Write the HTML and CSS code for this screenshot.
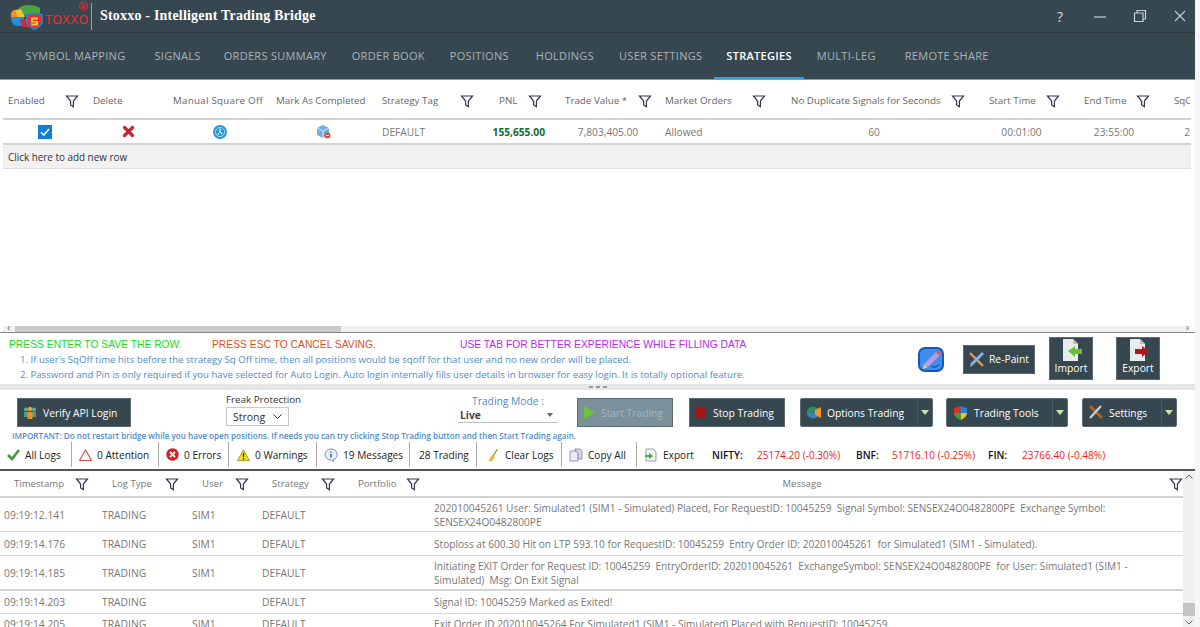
FILE: index.html
```html
<!DOCTYPE html>
<html lang="en">
<head>
    <meta charset="utf-8">
    <title>Stoxxo - Intelligent Trading Bridge</title>
    <link rel="stylesheet" href="styles.css">
</head>
<body>
<svg class="defs" width="0" height="0">
    <symbol id="funnel" viewBox="0 0 14 14">
        <path d="M1.5 2h11L8.4 7v5.6L5.6 11V7z" fill="none" stroke="#3d3450" stroke-width="1.2"/>
    </symbol>
    <symbol id="caret" viewBox="0 0 8 5">
        <path d="M0 0h8L4 5z" fill="#c9e6a8"/>
    </symbol>
</svg>

<div class="app">
    <!-- Title bar -->
    <header class="titlebar">
        <svg class="logo" width="35" height="30" viewBox="10 0 35 30">
            <path d="M19 7c4-4 15-4 21 0v7l-11 3-10-6z" fill="#46a83c"/>
            <path d="M15 9l6-1 4 8-9 1z" fill="#e8c23a"/>
            <path d="M11 13c0-2 2-4 4-4l3 8-7 0z" fill="#f2911f"/>
            <path d="M11 16h13v9h-7c-4 0-6-5-6-9z" fill="#1f8fe0"/>
            <path d="M20 18h10v8h-8z" fill="#d42a2a"/>
            <path d="M26 13c3-1.500 14-1.500 17 0v7c0 4-4 7-8.500 9.500C30 27 26 24 26 20z" fill="#2a7fd0"/>
            <path d="M28 14.500c3-1 10-1 13 0v5.500c0 3-3 5.500-6.500 7.500C31 25.500 28 23 28 20z" fill="#e63028"/>
            <path d="M31 16.500h7v2h-5v1.500h5v4.500h-7v-2h5v-1h-5z" fill="#f6c93a"/>
        </svg>
        <span class="brand">TOXXO<sup>®</sup></span>
        <h1 class="app-title">Stoxxo - Intelligent Trading Bridge</h1>
        <div class="win-controls">
            <span class="win-help">?</span>
            <svg width="14" height="14" viewBox="0 0 14 14"><path d="M1 8h12" stroke="#c9d0d4" stroke-width="1.2"/></svg>
            <svg width="14" height="14" viewBox="0 0 14 14"><path d="M1.5 4h8.500v8.500H1.500zM4 4V1.500h8.500V10H10" fill="none" stroke="#c9d0d4" stroke-width="1.2"/></svg>
            <svg width="14" height="14" viewBox="0 0 14 14"><path d="M2 2l10 10M12 2L2 12" stroke="#c9d0d4" stroke-width="1.1"/></svg>
        </div>
    </header>

    <!-- Main tabs -->
    <nav class="tabs">
        <a class="tab">Symbol Mapping</a>
        <a class="tab">Signals</a>
        <a class="tab">Orders Summary</a>
        <a class="tab">Order Book</a>
        <a class="tab">Positions</a>
        <a class="tab">Holdings</a>
        <a class="tab">User Settings</a>
        <a class="tab active">Strategies</a>
        <a class="tab">Multi-Leg</a>
        <a class="tab">Remote Share</a>
    </nav>

    <!-- Strategies grid -->
    <section class="strategies">
        <div class="grid-head strat-cols">
            <div class="hc hc-enabled">Enabled<svg class="funnel"><use href="#funnel"/></svg></div>
            <div class="hc hc-delete">Delete</div>
            <div class="hc hc-manual">Manual Square Off</div>
            <div class="hc hc-mark">Mark As Completed</div>
            <div class="hc hc-tag">Strategy Tag<svg class="funnel"><use href="#funnel"/></svg></div>
            <div class="hc hc-pnl">PNL<svg class="funnel"><use href="#funnel"/></svg></div>
            <div class="hc hc-value">Trade Value *<svg class="funnel"><use href="#funnel"/></svg></div>
            <div class="hc hc-market">Market Orders<svg class="funnel"><use href="#funnel"/></svg></div>
            <div class="hc hc-dup">No Duplicate Signals for Seconds<svg class="funnel"><use href="#funnel"/></svg></div>
            <div class="hc hc-start">Start Time<svg class="funnel"><use href="#funnel"/></svg></div>
            <div class="hc hc-end">End Time<svg class="funnel"><use href="#funnel"/></svg></div>
            <div class="hc hc-sq">SqO</div>
        </div>
        <div class="grid-row strat-cols">
            <div class="cell center">
                <svg width="14" height="14" viewBox="0 0 14 14"><rect width="14" height="14" fill="#0f7fd8"/><path d="M3 7.200l2.800 2.800L11 4" fill="none" stroke="#fff" stroke-width="1.6"/></svg>
            </div>
            <div class="cell center">
                <svg width="13" height="13" viewBox="0 0 13 13"><path d="M2.500 2.500l8 8M10.500 2.500l-8 8" stroke="#c8262a" stroke-width="3.2" stroke-linecap="round"/></svg>
            </div>
            <div class="cell center">
                <svg width="14" height="14" viewBox="0 0 14 14"><circle cx="7" cy="7" r="7" fill="#2b95d6"/><circle cx="7" cy="7" r="4.600" fill="none" stroke="#a6d8f2" stroke-width="1"/><path d="M7 3.600V7l2.400 2M4.600 9.500l1.500-1.300" stroke="#fff" stroke-width="1.1" fill="none"/></svg>
            </div>
            <div class="cell center">
                <svg width="15" height="15" viewBox="0 0 15 15"><path d="M1 4l6-3 6 3v7l-6 3-6-3z" fill="#6fb0e0"/><path d="M1 4l6 3 6-3M7 7v7" fill="none" stroke="#dcecf8" stroke-width=".9"/><circle cx="11.500" cy="11.500" r="3" fill="#e5473a"/><path d="M10 11.500h3" stroke="#fff" stroke-width="1"/></svg>
            </div>
            <div class="cell tag">DEFAULT</div>
            <div class="cell pnl">155,655.00</div>
            <div class="cell center">7,803,405.00</div>
            <div class="cell tag">Allowed</div>
            <div class="cell center dup">60</div>
            <div class="cell center">00:01:00</div>
            <div class="cell center">23:55:00</div>
            <div class="cell sq">2</div>
        </div>
        <div class="add-row">Click here to add new row</div>
        <div class="grid-empty"></div>
        <div class="h-scroll">
            <span class="arrow">&lsaquo;</span>
            <div class="h-thumb"></div>
            <span class="arrow arrow-right">&rsaquo;</span>
        </div>
    </section>

    <!-- Hints under the grid -->
    <section class="hints">
        <div class="hint-text">
            <div class="hint-keys">
                <span class="key-enter">PRESS ENTER TO SAVE THE ROW.</span>
                <span class="key-esc">PRESS ESC TO CANCEL SAVING.</span>
                <span class="key-tab">USE TAB FOR BETTER EXPERIENCE WHILE FILLING DATA</span>
            </div>
            <p class="hint-line">1. If user's SqOff time hits before the strategy Sq Off time, then all positions would be sqoff for that user and no new order will be placed.</p>
            <p class="hint-line">2. Password and Pin is only required if you have selected for Auto Login. Auto login internally fills user details in browser for easy login. It is totally optional feature.</p>
        </div>
        <div class="hint-actions">
            <svg class="paint-badge" width="28" height="27" viewBox="0 0 28 27">
                <rect x="1" y="1" width="26" height="25" rx="7" fill="#1457c4"/>
                <rect x="3" y="3" width="22" height="21" rx="5" fill="#3f8ee8"/>
                <path d="M14 20c3 2 7 1 8-2" fill="none" stroke="#1457c4" stroke-width="1.5"/>
                <path d="M7 18L19 6l3.500 3.500-12 12z" fill="#b49ae8"/>
                <path d="M7 18l3.500 3.500-5 1.500z" fill="#f4c36a"/>
                <path d="M19 6l3.500 3.500 2-3-2.500-2z" fill="#e8506a"/>
            </svg>
            <button class="btn btn-repaint">
                <svg width="17" height="17" viewBox="0 0 17 17"><path d="M2 2l13 13" stroke="#d9a05a" stroke-width="2.4"/><path d="M15 2L3 14" stroke="#7cb6e8" stroke-width="3"/><path d="M3 14l-1.500 2 2.500-1z" fill="#f2d08a"/></svg>
                Re-Paint
            </button>
            <button class="btn btn-tall">
                <svg width="26" height="24" viewBox="0 0 26 24"><path d="M5 1h10l5 5v17H5z" fill="#e8ebec"/><path d="M15 1v5h5z" fill="#b6bdc0"/><path d="M10 13l7-5v3h7v5h-7v3z" fill="#6cbf3a"/></svg>
                Import
            </button>
            <button class="btn btn-tall btn-export">
                <svg width="26" height="24" viewBox="0 0 26 24"><path d="M5 1h10l5 5v17H5z" fill="#e8ebec"/><path d="M15 1v5h5z" fill="#b6bdc0"/><path d="M24 13l-7-5v3h-7v5h7v3z" fill="#b8141c"/></svg>
                Export
            </button>
        </div>
    </section>

    <div class="splitter"><span></span><span></span><span></span></div>

    <!-- Trading controls -->
    <section class="controls">
        <button class="btn btn-verify">
            <svg width="14" height="14" viewBox="0 0 14 14"><circle cx="3" cy="3.500" r="2" fill="#5fb0a0"/><circle cx="11" cy="3.500" r="2" fill="#5fb0a0"/><circle cx="7" cy="3" r="2.200" fill="#e8a43a"/><path d="M1 6h4v5H1zM9 6h4v5H9z" fill="#4f9c8a"/><path d="M4.500 6h5v7h-5z" fill="#e8952a"/></svg>
            Verify API Login
        </button>
        <div class="freak">
            <label>Freak Protection</label>
            <div class="select-box">Strong
                <svg width="9" height="5" viewBox="0 0 9 5"><path d="M.5.500l4 4 4-4" fill="none" stroke="#333" stroke-width="1"/></svg>
            </div>
        </div>
        <div class="mode">
            <label>Trading Mode :</label>
            <div class="mode-select"><b>Live</b><i></i></div>
        </div>
        <button class="btn btn-start" disabled>
            <svg width="11" height="13" viewBox="0 0 11 13"><path d="M0 0l11 6.500L0 13z" fill="#6fc23a"/></svg>
            Start Trading
        </button>
        <button class="btn btn-stop">
            <svg width="11" height="11" viewBox="0 0 11 11"><rect width="11" height="11" fill="#a81414"/></svg>
            Stop Trading
        </button>
        <div class="split btn-options">
            <button class="btn split-main">
                <svg width="15" height="13" viewBox="0 0 15 13"><circle cx="6" cy="6.500" r="6" fill="#2f8f5a"/><path d="M0 6.500h12a6 6 0 0 1-12 0z" fill="#3f7fb8"/><path d="M8 4l6-3v11L8 9z" fill="#e89a2a"/></svg>
                Options Trading
            </button>
            <span class="split-arrow"><svg width="8" height="5"><use href="#caret"/></svg></span>
        </div>
        <div class="split btn-tools">
            <button class="btn split-main">
                <svg width="13" height="14" viewBox="0 0 13 14"><path d="M6.500 7H13c0 3-3 5.500-6.500 7z" fill="#e8c21e"/><path d="M6.500 0L0 2v5h6.500z" fill="#d8322a"/><path d="M0 7c0 3 3 5.500 6.500 7V7z" fill="#3f9a3a"/><path d="M6.500 0L13 2v5H6.500z" fill="#2f7fd0"/></svg>
                Trading Tools
            </button>
            <span class="split-arrow"><svg width="8" height="5"><use href="#caret"/></svg></span>
        </div>
        <div class="split btn-settings">
            <button class="btn split-main">
                <svg width="15" height="15" viewBox="0 0 15 15"><path d="M2 1l12 12" stroke="#b5641e" stroke-width="2.600"/><path d="M13 1L2 13" stroke="#c8ccce" stroke-width="2.400"/></svg>
                Settings
            </button>
            <span class="split-arrow"><svg width="8" height="5"><use href="#caret"/></svg></span>
        </div>
    </section>
    <p class="important">IMPORTANT: Do not restart bridge while you have open positions. If needs you can try clicking Stop Trading button and then Start Trading again.</p>

    <!-- Log toolbar -->
    <section class="log-bar">
        <div class="log-item li-all">
            <svg width="13" height="13" viewBox="0 0 13 13"><path d="M1 7l4 4 7-9" fill="none" stroke="#3f9a3a" stroke-width="2.600"/></svg>All Logs
        </div>
        <div class="log-item li-att">
            <svg width="13" height="12" viewBox="0 0 13 12"><path d="M6.500 1L12.500 11.500H.5z" fill="#fff" stroke="#d9574a" stroke-width="1.2"/></svg>0 Attention
        </div>
        <div class="log-item li-err">
            <svg width="13" height="13" viewBox="0 0 13 13"><circle cx="6.500" cy="6.500" r="6.200" fill="#d61f26"/><path d="M4 4l5 5M9 4l-5 5" stroke="#fff" stroke-width="1.8"/></svg>0 Errors
        </div>
        <div class="log-item li-warn">
            <svg width="13" height="12" viewBox="0 0 13 12"><path d="M6.500 .8L12.600 11.500H.4z" fill="#f3d91e" stroke="#8a8420" stroke-width=".7"/><path d="M6.500 4v4M6.500 9v1.400" stroke="#222" stroke-width="1.2"/></svg>0 Warnings
        </div>
        <div class="log-item li-msg">
            <svg width="14" height="14" viewBox="0 0 14 14"><path d="M7 1a6 5.500 0 0 1 2 10.700L9.500 13.500 7 12A6 5.500 0 0 1 7 1z" fill="#e8eef8" stroke="#7c8fc0"/><path d="M7 3.500v1M7 6v3.500" stroke="#2f5fb0" stroke-width="1.500"/></svg>19 Messages
        </div>
        <div class="log-item li-trd">28 Trading</div>
        <div class="log-item li-clear">
            <svg width="12" height="14" viewBox="0 0 12 14"><path d="M10.500 1L6 8" stroke="#a8862a" stroke-width="1.3"/><path d="M5 7l3 2-3 4H1.500z" fill="#e8b82a"/></svg>Clear Logs
        </div>
        <div class="log-item li-copy">
            <svg width="14" height="14" viewBox="0 0 14 14"><path d="M1 3h6l2 2v8H1z" fill="#eaeaf6" stroke="#7f7fa8" stroke-width=".8"/><path d="M6 1h5l2 2v8H9V5L7 3H6z" fill="#d4d4ec" stroke="#7f7fa8" stroke-width=".8"/></svg>Copy All
        </div>
        <div class="log-item li-export">
            <svg width="13" height="14" viewBox="0 0 13 14"><path d="M2 1h7l3 3v9H2z" fill="#f4f4f4" stroke="#7c8a90" stroke-width=".8"/><path d="M1 7h4V5l4 3-4 3V9H1z" fill="#3fae3a"/></svg>Export
        </div>
        <div class="ticker">
            <b class="t-nifty">NIFTY:</b><span class="t-nifty-val">25174.20 (-0.30%)</span>
            <b class="t-bnf">BNF:</b><span class="t-bnf-val">51716.10 (-0.25%)</span>
            <b class="t-fin">FIN:</b><span class="t-fin-val">23766.40 (-0.48%)</span>
        </div>
    </section>

    <!-- Log table -->
    <section class="logs">
        <div class="logs-table">
            <div class="log-head log-cols">
                <div class="lh lh-time">Timestamp<svg class="funnel"><use href="#funnel"/></svg></div>
                <div class="lh lh-type">Log Type<svg class="funnel"><use href="#funnel"/></svg></div>
                <div class="lh lh-user">User<svg class="funnel"><use href="#funnel"/></svg></div>
                <div class="lh lh-strat">Strategy<svg class="funnel"><use href="#funnel"/></svg></div>
                <div class="lh lh-port">Portfolio<svg class="funnel"><use href="#funnel"/></svg></div>
                <div class="lh lh-msg"><span>Message</span><svg class="funnel"><use href="#funnel"/></svg></div>
            </div>
            <div class="log-row log-cols r-1">
                <div>09:19:12.141</div><div>TRADING</div><div>SIM1</div><div>DEFAULT</div><div></div>
                <div class="msg">202010045261 User: Simulated1 (SIM1 - Simulated) Placed, For RequestID: 10045259&nbsp; Signal Symbol: SENSEX24O0482800PE&nbsp; Exchange Symbol:<br>SENSEX24O0482800PE</div>
            </div>
            <div class="log-row log-cols r-2">
                <div>09:19:14.176</div><div>TRADING</div><div>SIM1</div><div>DEFAULT</div><div></div>
                <div class="msg">Stoploss at 600.30 Hit on LTP 593.10 for RequestID: 10045259&nbsp; Entry Order ID: 202010045261&nbsp; for Simulated1 (SIM1 - Simulated).</div>
            </div>
            <div class="log-row log-cols r-3">
                <div>09:19:14.185</div><div>TRADING</div><div>SIM1</div><div>DEFAULT</div><div></div>
                <div class="msg">Initiating EXIT Order for Request ID: 10045259&nbsp; EntryOrderID: 202010045261&nbsp; ExchangeSymbol: SENSEX24O0482800PE&nbsp; for User: Simulated1 (SIM1 -<br>Simulated)&nbsp; Msg: On Exit Signal</div>
            </div>
            <div class="log-row log-cols r-4">
                <div>09:19:14.203</div><div>TRADING</div><div></div><div>DEFAULT</div><div></div>
                <div class="msg">Signal ID: 10045259 Marked as Exited!</div>
            </div>
            <div class="log-row log-cols r-5">
                <div>09:19:14.205</div><div>TRADING</div><div>SIM1</div><div>DEFAULT</div><div></div>
                <div class="msg">Exit Order ID 202010045264 For Simulated1 (SIM1 - Simulated) Placed with RequestID: 10045259</div>
            </div>
        </div>
        <div class="v-scroll">
            <svg width="8" height="5" viewBox="0 0 8 5"><path d="M.5 4.500L4 1l3.500 3.500" fill="none" stroke="#666"/></svg>
            <div class="v-thumb"></div>
            <svg width="8" height="5" viewBox="0 0 8 5"><path d="M.5.500L4 4l3.500-3.500" fill="none" stroke="#666"/></svg>
        </div>
    </section>
</div>
</body>
</html>
```

FILE: styles.css
```css
* {
    box-sizing: border-box;
}

html, body {
    margin: 0;
    height: 627px;
    overflow: hidden;
    background-color: #f5f6f9;
}

.defs {
    position: absolute;
}

.app {
    width: 1195px;
    height: 627px;
    display: flex;
    flex-direction: column;
    overflow: hidden;
    font-family: "Open Sans", "Noto Sans", sans-serif;
    font-size: 11px;
    color: #222;
    background-color: #fff;
}

button {
    font-family: inherit;
}

/* Title bar */
.titlebar {
    height: 33px;
    flex: none;
    display: flex;
    align-items: center;
    background-color: #37474f;
    border-bottom: 1px solid #2b373d;
    padding-left: 10px;
}

.logo {
    flex: none;
}

.brand {
    position: relative;
    width: 47px;
    padding-top: 7px;
    border-right: 1px solid #98a4a9;
    font-family: "Liberation Sans", sans-serif;
    font-size: 12px;
    letter-spacing: .3px;
    color: #ee2f2f;
    line-height: 20px;
}

.brand sup {
    position: absolute;
    top: -3px;
    right: 3px;
    font-size: 12px;
    line-height: 14px;
}

.app-title {
    margin: 0 0 0 8px;
    font-family: "Liberation Serif", serif;
    font-size: 14px;
    font-weight: bold;
    letter-spacing: .2px;
    color: #fff;
}

.win-controls {
    margin-left: auto;
    display: flex;
    gap: 26px;
    align-items: center;
    padding-right: 8px;
}

.win-help {
    margin-right: 4px;
    font-size: 14px;
    color: #d5dbde;
}

/* Tabs */
.tabs {
    height: 46px;
    flex: none;
    display: flex;
    background-color: #37474f;
    padding-left: 13px;
}

.tab {
    padding: 0 12.5px;
    display: flex;
    align-items: center;
    font-size: 11px;
    letter-spacing: .3px;
    text-transform: uppercase;
    color: #a9b3b8;
    border-bottom: 2px solid transparent;
}

/* spacing between the labels is not even in the app */
.tab:nth-child(1) { margin-right: 4px; }
.tab:nth-child(2) { margin-right: -2px; }
.tab:nth-child(5) { margin-right: 2px; }
.tab:nth-child(7) { margin-right: -1px; }
.tab:nth-child(9) { margin-right: 4px; }

.tab.active {
    color: #fff;
    font-weight: 600;
    border-bottom-color: #2ba3e0;
}

/* Strategies grid */
.strategies {
    height: 254px;
    flex: none;
    padding: 3px 4px 0 3px;
    border-top: 1px solid #999;
    border-bottom: 1px solid #888;
    display: flex;
    flex-direction: column;
    overflow: hidden;
}

.strat-cols {
    display: grid;
    grid-template-columns: 84px 83px 100px 106px 114px 67px 102px 124px 192px 93px 92px 30px;
}

.grid-head {
    height: 37px;
    flex: none;
    border-bottom: 2px solid #d0d0d0;
    font-size: 9.8px;
    color: #666;
}

.hc {
    display: flex;
    align-items: center;
    white-space: nowrap;
}

.funnel {
    width: 14px;
    height: 14px;
    flex: none;
    margin-left: auto;
}

.hc-enabled { padding: 0 8px 0 5px; }
.hc-delete { padding-left: 6px; }
.hc-manual { padding-left: 3px; letter-spacing: .25px; }
.hc-mark { padding-left: 6px; }
.hc-tag { padding: 0 16px 0 6px; }
.hc-pnl { padding: 0 15px 0 9px; }
.hc-value { padding: 0 7px 0 8px; }
.hc-market { padding: 0 17px 0 6px; }
.hc-dup { padding: 0 10px 0 8px; }
.hc-start { padding: 0 8px 0 14px; }
.hc-end { padding: 0 10px 0 16px; }
.hc-sq { padding-left: 14px; overflow: hidden; }

.grid-row {
    height: 25px;
    flex: none;
    border-bottom: 2px solid #d4d4d4;
    font-size: 10.2px;
    color: #777;
}

.cell {
    display: flex;
    align-items: center;
    white-space: nowrap;
}

.cell.center {
    justify-content: center;
}

.cell.dup {
    padding-right: 10px;
}

.cell.tag {
    padding-left: 6px;
}

.cell.pnl {
    justify-content: flex-end;
    padding-right: 12px;
    font-weight: bold;
    color: #0b6b2e;
}

.cell.sq {
    justify-content: flex-end;
    overflow: hidden;
}

.add-row {
    height: 24px;
    flex: none;
    padding-left: 5px;
    display: flex;
    align-items: center;
    border-bottom: 1px solid #ddd;
    background-color: #f1f1f1;
    font-size: 9.9px;
    color: #333;
}

.grid-empty {
    flex: 1;
}

.h-scroll {
    height: 6px;
    flex: none;
    position: relative;
    display: flex;
    background-color: #f0f0f0;
}

.h-thumb {
    width: 326px;
    margin-left: 12px;
    background-color: #c9c9c9;
}

.arrow {
    position: absolute;
    left: 4px;
    top: -6px;
    font-size: 11px;
    line-height: 14px;
    color: #666;
}

.arrow-right {
    left: auto;
    right: 2px;
}

/* Hints */
.hints {
    height: 51px;
    flex: none;
    display: flex;
    padding: 4px 35px 0 9px;
}

.hint-keys {
    display: grid;
    grid-template-columns: 203px 248px auto;
    font-family: "Liberation Sans", sans-serif;
    font-size: 10.3px;
    line-height: 15px;
    white-space: nowrap;
}

.key-enter { color: #22d822; }
.key-esc { color: #d9501e; }
.key-tab { color: #b92be0; }

.hint-line {
    margin: 0 0 0 11px;
    font-size: 9.6px;
    font-weight: 500;
    line-height: 15px;
    color: #4f8cc8;
    white-space: nowrap;
}

.hint-actions {
    margin-left: auto;
    display: flex;
    align-items: center;
    padding-bottom: 5px;
}

.paint-badge {
    flex: none;
    margin-top: 2px;
}

.btn {
    display: flex;
    align-items: center;
    border: 1px solid #5b6a72;
    border-radius: 0;
    background-color: #37474f;
    color: #fff;
    font-size: 10.3px;
    padding: 0;
    white-space: nowrap;
}

.btn-repaint {
    width: 72px;
    height: 29px;
    margin: 2px 14px 0 18px;
    padding-left: 4px;
    gap: 4px;
}

.btn-tall {
    width: 44px;
    height: 43px;
    flex-direction: column;
    justify-content: center;
    padding-bottom: 3px;
    line-height: 13px;
}

.btn-export {
    margin-left: 23px;
}

.splitter {
    height: 6px;
    flex: none;
    display: flex;
    justify-content: center;
    align-items: center;
    gap: 3px;
    background-color: #e6e6e6;
}

.splitter span {
    width: 4px;
    height: 2px;
    background-color: #9a9a9a;
}

/* Trading controls */
.controls {
    height: 40px;
    flex: none;
    display: flex;
    align-items: flex-end;
    padding-left: 17px;
    padding-bottom: 3px;
}

.controls .btn {
    height: 29px;
}

.btn-verify {
    width: 114px;
    padding-left: 5px;
    gap: 6px;
}

.freak {
    width: 100px;
    margin-left: 95px;
    color: #333;
    font-size: 9.8px;
    align-self: flex-start;
    padding-top: 3px;
    line-height: 14px;
}

.freak label {
    display: block;
}

.select-box {
    width: 63px;
    height: 19px;
    padding: 0 6px;
    display: flex;
    align-items: center;
    justify-content: space-between;
    border: 1px solid #c9c9c9;
    font-size: 10.5px;
}

.mode {
    width: 100px;
    margin-left: 132px;
    align-self: flex-start;
    padding-top: 5px;
    text-align: center;
    color: #4f8cc8;
    font-size: 10.3px;
    line-height: 13px;
}

.mode label {
    display: block;
}

.mode-select {
    height: 15px;
    padding: 0 5px 0 2px;
    display: flex;
    align-items: center;
    justify-content: space-between;
    border-bottom: 1px solid #bdbdbd;
    color: #444;
}

.mode-select i {
    width: 0;
    height: 0;
    border-left: 3px solid transparent;
    border-right: 3px solid transparent;
    border-top: 4px solid #666;
}

.btn-start {
    width: 96px;
    margin-left: 19px;
    padding-left: 6px;
    gap: 6px;
    background-color: #7a919c;
    color: #a6b6bd;
}

.btn-stop {
    width: 96px;
    margin-left: 16px;
    padding-left: 5px;
    gap: 7px;
}

.split {
    height: 29px;
    display: flex;
    border: 1px solid #5b6a72;
    border-radius: 2px;
    background-color: #37474f;
}

.controls .split-main {
    flex: 1;
    height: 27px;
    border: none;
    padding-left: 6px;
    gap: 5px;
}

.split-arrow {
    width: 15px;
    display: flex;
    align-items: center;
    justify-content: center;
    border-left: 1px solid #4a5a62;
}

.btn-options { width: 133px; margin-left: 15px; }
.btn-tools { width: 122px; margin-left: 13px; }
.btn-settings { width: 95px; margin-left: 14px; }
.btn-tools .split-main { padding-left: 7px; gap: 7px; }
.btn-settings .split-main { padding-left: 5px; gap: 6px; }

.important {
    height: 11px;
    flex: none;
    margin: 0;
    padding-left: 12px;
    font-size: 8.15px;
    font-weight: 600;
    line-height: 11px;
    color: #4f8cc8;
    white-space: nowrap;
}

/* Log toolbar */
.log-bar {
    height: 30px;
    flex: none;
    display: flex;
    align-items: stretch;
    border-bottom: 2px solid #555;
    font-size: 10.1px;
}

.log-item {
    display: flex;
    align-items: center;
    gap: 5px;
    margin: 1px 0 2px;
    border-right: 1px solid #aaa;
    white-space: nowrap;
}

.li-all { width: 72px; padding-left: 7px; }
.li-att { width: 87px; padding-left: 7px; }
.li-err { width: 70px; padding-left: 7px; }
.li-warn { width: 88px; padding-left: 8px; }
.li-msg { width: 93px; padding-left: 7px; }
.li-trd { width: 67px; padding-left: 9px; }
.li-clear { width: 85px; padding-left: 10px; gap: 6px; }
.li-copy { width: 75px; padding-left: 7px; }
.li-export { width: 75px; padding-left: 7px; gap: 6px; border-right: none; }

.ticker {
    display: flex;
    align-items: center;
    white-space: nowrap;
    color: #f01c1c;
}

.ticker b {
    color: #111;
    font-weight: 600;
}

.t-nifty { width: 45px; }
.t-nifty-val { width: 99px; }
.t-bnf { width: 36px; }
.t-bnf-val { width: 96px; }
.t-fin { width: 34px; }

/* Log table */
.logs {
    flex: 1;
    display: flex;
    min-height: 0;
}

.logs-table {
    flex: 1;
    min-width: 0;
    overflow: hidden;
}

.log-cols {
    display: grid;
    grid-template-columns: 98px 90px 70px 85px 87px 1fr;
}

.log-head {
    height: 27px;
    border-bottom: 2px solid #d4d4d4;
    font-size: 9.6px;
    color: #777;
}

.lh {
    display: flex;
    align-items: center;
    white-space: nowrap;
}

.lh-time { padding: 0 9px 0 14px; }
.lh-type { padding: 0 9px 0 14px; }
.lh-user { padding: 0 9px 0 14px; }
.lh-strat { padding: 0 8px 0 14px; }
.lh-port { padding: 0 10px 0 15px; }

.lh-msg span {
    flex: 1;
    text-align: center;
    padding-left: 5px;
}

.log-row {
    align-items: center;
    border-bottom: 1px solid #d4d4d4;
    font-size: 10.3px;
    color: #777;
    white-space: nowrap;
}

.log-row > div {
    padding-left: 4px;
}

.log-row > .msg {
    font-size: 10.14px;
    line-height: 14px;
}

.r-1 { height: 34px; }
.r-2 { height: 24px; }
.r-3 { height: 35px; border-bottom-width: 2px; }
.r-4 { height: 23px; }
.r-5 { height: 24px; align-items: start; padding-top: 3px; }

.v-scroll {
    width: 12px;
    flex: none;
    display: flex;
    flex-direction: column;
    align-items: center;
    padding: 3px 0 2px;
    background-color: #f0f0f0;
}

.v-thumb {
    width: 12px;
    height: 13px;
    margin-top: auto;
    margin-bottom: 4px;
    background-color: #c4c4c4;
}
```
